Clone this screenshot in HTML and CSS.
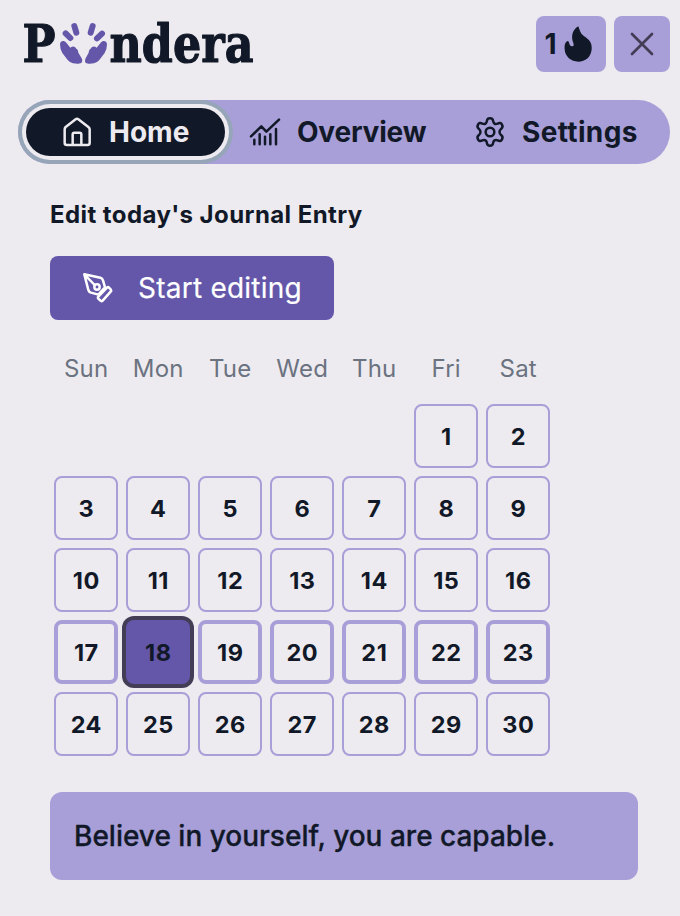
FILE: index.html
```html
<!DOCTYPE html>
<html lang="en">
<head>
<meta charset="utf-8">
<title>Pondera</title>
<link rel="stylesheet" href="styles.css">
</head>
<body>
<header class="header">
  <svg class="logo" viewBox="18 0 260 100" role="img" aria-label="Pondera">
    <text class="wordmark" x="22.5" y="61.5" textLength="33" lengthAdjust="spacingAndGlyphs">P</text>
    <text class="wordmark" x="109.5" y="61.5" textLength="144" lengthAdjust="spacingAndGlyphs">ndera</text>
    <g class="hands" transform="translate(50 10) scale(.3333)">
      <path d="M30 103C31 92 42 90 49 98L61 113C68 107 75 109 79 116Q84 117 85 128L95 145C100 157 94 162 82 161L69 160Q60 158 53 150L37 129Q30 118 30 103Z"/>
      <path d="M171 103C170 92 159 90 152 98L140 113C133 107 126 109 122 116Q117 117 116 128L107 145C102 157 107 162 119 161L132 160Q141 158 148 150L164 129Q171 118 171 103Z"/>
      <path class="finger" d="M73 48L79 68M47 70L61 84M128 48L122 68M156 71L141 85"/>
    </g>
  </svg>
  <div class="actions">
    <button class="action streak"><span>1</span>
      <svg width="28" height="36" viewBox="102 50 84 108"><path d="M145 51C151 68 151 73 167 84C183 95 186 107 185 120C183 144 166 157 145 157C123 157 105 142 104 120C103 108 105 98 113 95C119 96 116 106 123 110Q134 113 130 101C123 85 125 62 145 51Z"/></svg>
    </button>
    <button class="action close" aria-label="Close"><svg width="24" height="24" viewBox="0 0 24 24"><path d="M2 2L22 22M22 2L2 22"/></svg></button>
  </div>
</header>
<nav class="tabs">
  <a class="tab active"><svg class="line" width="30" height="30" viewBox="156 73 90 90"><path d="M164 110Q164 106 167 103L197 80Q201 77 205 80L235 103Q239 106 239 110V151Q239 157 232 157H171Q164 157 164 151ZM188 157V125Q188 120 193 120H209Q214 120 214 125V157"/></svg><span>Home</span></a>
  <a class="tab overview"><svg class="line" width="30" height="30" viewBox="60 75 90 90"><path d="M63 133L94 103L109 119L147 83M73 143V157M89 127V157M105 134V157M121 127V157M138 111V157"/></svg><span>Overview</span></a>
  <a class="tab settings"><svg class="line" width="30" height="30" viewBox="45 75 90 90"><path d="M81 86Q82 79 90 79Q98 79 99 86Q101 99 113 95Q122 90 126 98Q130 105 124 110Q113 120 124 130Q130 135 126 142Q122 150 113 145Q101 141 99 154Q98 161 90 161Q82 161 81 154Q79 141 67 145Q58 150 54 142Q50 135 56 130Q67 120 56 110Q50 105 54 98Q58 90 67 95Q79 99 81 86Z"/><circle cx="90" cy="120" r="13"/></svg><span>Settings</span></a>
</nav>
<main class="main">
  <h1 class="title">Edit today's Journal Entry</h1>
  <button class="edit"><svg class="line" width="30" height="30" viewBox="129 248 90 90"><path d="M133 252L181 262Q187 264 189 270L195 291L175 313L153 307Q147 305 145 299ZM133 252L164 284M175 319L201 292Q204 289 207 292L212 297Q215 301 212 304L188 331Q185 334 182 331L176 326Q172 322 175 319Z"/><circle cx="171" cy="290" r="8"/></svg><span>Start editing</span></button>
  <div class="calendar">
    <span class="weekday">Sun</span><span class="weekday">Mon</span><span class="weekday">Tue</span><span class="weekday">Wed</span><span class="weekday">Thu</span><span class="weekday">Fri</span><span class="weekday">Sat</span>
    <span class="day first">1</span><span class="day">2</span>
    <span class="day">3</span><span class="day">4</span><span class="day">5</span><span class="day">6</span><span class="day">7</span><span class="day">8</span><span class="day">9</span>
    <span class="day">10</span><span class="day">11</span><span class="day">12</span><span class="day">13</span><span class="day">14</span><span class="day">15</span><span class="day">16</span>
    <span class="day week">17</span><span class="day today">18</span><span class="day week">19</span><span class="day week">20</span><span class="day week">21</span><span class="day week">22</span><span class="day week">23</span>
    <span class="day">24</span><span class="day">25</span><span class="day">26</span><span class="day">27</span><span class="day">28</span><span class="day">29</span><span class="day">30</span>
  </div>
  <p class="quote">Believe in yourself, you are capable.</p>
</main>
</body>
</html>
```

FILE: styles.css
```css
* { box-sizing: border-box; }
body { margin: 0; min-height: 916px; background: #edebf0; color: #111827; font-family: Inter, "Liberation Sans", sans-serif; }
button { border: 0; padding: 0; font: inherit; color: inherit; }
svg { display: block; flex: none; overflow: visible; }
.header { display: flex; justify-content: space-between; height: 100px; padding: 0 10px 0 18px; }
.logo { width: 260px; height: 100px; }
.wordmark { font: bold 53px "DejaVu Serif", serif; fill: #111827; stroke: #111827; stroke-width: 1.2; stroke-linejoin: round; }
.hands { fill: #6457a9; }
.finger { fill: none; stroke: #6457a9; stroke-width: 18; stroke-linecap: round; }
.actions { display: flex; gap: 8px; padding-top: 16px; }
.action { display: flex; align-items: center; justify-content: center; width: 56px; height: 56px; border-radius: 8px; background: #a89fd8; }
.streak { width: 70px; justify-content: flex-start; gap: 7px; padding-left: 8px; font-size: 28px; font-weight: 700; }
.streak span { width: 13px; }
.streak svg { fill: #111827; }
.close svg { fill: none; stroke: #433d56; stroke-width: 2.7; stroke-linecap: round; }
.line { fill: none; stroke: currentColor; stroke-width: 7.5; stroke-linecap: round; stroke-linejoin: round; }
.tabs { display: flex; align-items: center; height: 64px; margin: 0 10px 0 18px; padding-left: 8px; border-radius: 32px; background: #a89fd8; }
.tab { display: flex; align-items: center; height: 48px; gap: 17px; font-size: 28px; font-weight: 700; line-height: 48px; white-space: nowrap; }
.active { width: 199px; padding-left: 36px; border-radius: 24px; background: #111827; color: #edebf0; box-shadow: 0 0 0 4px #edebf0, 0 0 0 8px #97a5b9; }
.overview { width: 225px; padding-left: 25px; letter-spacing: -.2px; }
.settings { padding-left: 25px; letter-spacing: .35px; }
.main { padding: 35px 42px 0 50px; }
.title { margin: 0; font-size: 24px; line-height: 32px; font-weight: 700; letter-spacing: .42px; }
.edit { display: flex; align-items: center; gap: 25px; width: 284px; height: 64px; margin-top: 25px; padding-left: 33px; border-radius: 8px; background: #6457a9; color: #fff; font-size: 28px; letter-spacing: .23px; -webkit-text-stroke: .2px currentColor; }
.calendar { display: grid; grid-template-columns: repeat(7, 64px); gap: 8px; margin: 32px 0 0 4px; }
.weekday { height: 44px; line-height: 34px; text-align: center; text-indent: .4px; font-size: 24px; letter-spacing: .2px; color: #6b7280; }
.day { display: flex; align-items: center; justify-content: center; height: 64px; padding-top: 1px; border: 2px solid #a89fd8; border-radius: 8px; font-size: 23.5px; font-weight: 700; letter-spacing: .5px; text-indent: .6px; }
.first { grid-column: 6; }
.week { border-width: 4px; }
.today { border: 0; background: #6457a9; box-shadow: 0 0 0 4px #433d56; }
.quote { display: flex; align-items: center; height: 88px; margin: 36px 0 0; padding-left: 24px; border-radius: 12px; background: #a89fd8; font-size: 28px; font-weight: 500; -webkit-text-stroke: .3px currentColor; }
```
